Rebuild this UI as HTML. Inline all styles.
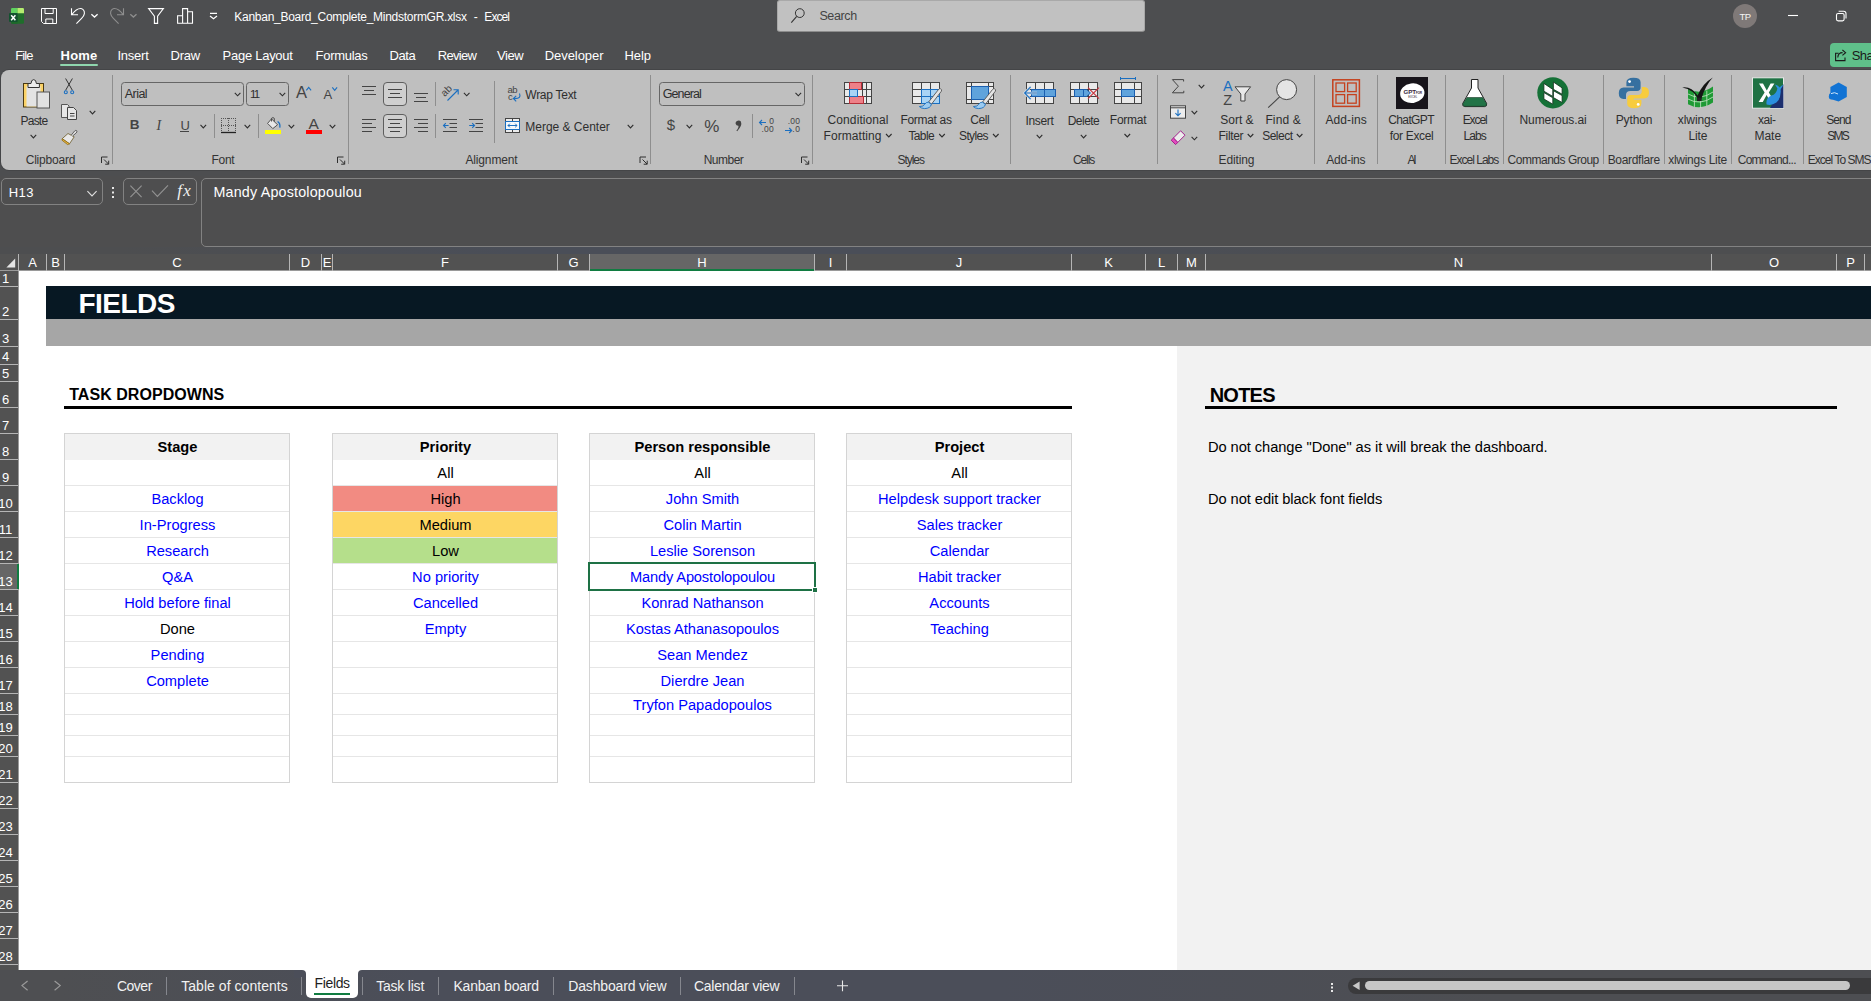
<!DOCTYPE html><html><head><meta charset="utf-8"><title>Kanban_Board_Complete_MindstormGR.xlsx - Excel</title><style>
*{box-sizing:border-box;margin:0;padding:0}
html,body{width:1871px;height:1001px;overflow:hidden;background:#4d4e50;font-family:"Liberation Sans",sans-serif;}
#app{position:relative;width:1871px;height:1001px;overflow:hidden;background:#4d4e50;}
.a{position:absolute;white-space:nowrap;}
.c{text-align:center;transform:translateX(-50%);}
svg{position:absolute;overflow:visible}
</style></head><body><div id="app">
<div class="a" style="left:234.30px;top:8.84px;font-size:12px;line-height:16px;color:#ffffff;letter-spacing:-0.273px;">Kanban_Board_Complete_MindstormGR.xlsx</div>
<div class="a" style="left:473.80px;top:8.84px;font-size:12px;line-height:16px;color:#ffffff;">-</div>
<div class="a" style="left:484.30px;top:8.84px;font-size:12px;line-height:16px;color:#ffffff;letter-spacing:-0.910px;">Excel</div>
<div class="a" style="left:777px;top:0px;width:368px;height:32px;background:#c1c1c1;border-radius:3px;border:1px solid #a9a9a9;border-bottom-color:#8c8c8c"></div>
<div class="a" style="left:819.40px;top:8.37px;font-size:12.5px;line-height:16px;color:#444;letter-spacing:-0.360px;">Search</div>
<div class="a" style="left:1733px;top:4px;width:24px;height:24px;border-radius:12px;background:#7f7978"></div>
<div class="a" style="left:1739.40px;top:10.61px;font-size:9.5px;line-height:12px;color:#f4f4f4;letter-spacing:-0.541px;">TP</div>
<div class="a" style="left:15.30px;top:46.80px;font-size:13px;line-height:17px;color:#ffffff;letter-spacing:-0.948px;">File</div>
<div class="a" style="left:60.60px;top:46.80px;font-size:13px;line-height:17px;color:#ffffff;letter-spacing:0.162px;font-weight:bold;">Home</div>
<div class="a" style="left:117.50px;top:46.80px;font-size:13px;line-height:17px;color:#ffffff;letter-spacing:-0.243px;">Insert</div>
<div class="a" style="left:170.60px;top:46.80px;font-size:13px;line-height:17px;color:#ffffff;letter-spacing:-0.289px;">Draw</div>
<div class="a" style="left:222.60px;top:46.80px;font-size:13px;line-height:17px;color:#ffffff;letter-spacing:-0.271px;">Page Layout</div>
<div class="a" style="left:315.60px;top:46.80px;font-size:13px;line-height:17px;color:#ffffff;letter-spacing:-0.283px;">Formulas</div>
<div class="a" style="left:389.50px;top:46.80px;font-size:13px;line-height:17px;color:#ffffff;letter-spacing:-0.423px;">Data</div>
<div class="a" style="left:437.80px;top:46.80px;font-size:13px;line-height:17px;color:#ffffff;letter-spacing:-0.713px;">Review</div>
<div class="a" style="left:497.10px;top:46.80px;font-size:13px;line-height:17px;color:#ffffff;letter-spacing:-0.425px;">View</div>
<div class="a" style="left:544.80px;top:46.80px;font-size:13px;line-height:17px;color:#ffffff;letter-spacing:-0.069px;">Developer</div>
<div class="a" style="left:624.60px;top:46.80px;font-size:13px;line-height:17px;color:#ffffff;letter-spacing:-0.114px;">Help</div>
<div class="a" style="left:60px;top:64px;width:38px;height:2px;background:#8fd6ae;border-radius:1px"></div>
<div class="a" style="left:1830px;top:43px;width:60px;height:24px;background:#5fc08a;border-radius:4px"></div>
<div class="a" style="left:1851.80px;top:46.70px;font-size:13px;line-height:17px;color:#1a1a1a;letter-spacing:-0.621px;">Share</div>
<div class="a" style="left:0px;top:69px;width:1881px;height:102px;background:#444547;border-radius:9px 0 0 9px"></div>
<div class="a" id="ribbon" style="left:1px;top:70px;width:1880px;height:100px;background:#bfbfbf;border-radius:8px 0 0 8px"></div>
<div class="a" style="left:20.50px;top:112.74px;font-size:12px;line-height:16px;color:#2e2e2e;letter-spacing:-0.771px;">Paste</div>
<div class="a" style="left:25.70px;top:152.34px;font-size:12px;line-height:16px;color:#333333;letter-spacing:-0.207px;">Clipboard</div>
<div class="a" style="left:112px;top:75px;width:1px;height:89px;background:#8e8e8e"></div>
<div class="a" style="left:121px;top:82px;width:123px;height:24px;border:1px solid #666;border-radius:3.5px;background:none"></div>
<div class="a" style="left:124.80px;top:85.67px;font-size:12.5px;line-height:16px;color:#2e2e2e;letter-spacing:-0.553px;">Arial</div>
<div class="a" style="left:246px;top:82px;width:43px;height:24px;border:1px solid #666;border-radius:3.5px;background:none"></div>
<div class="a" style="left:250.00px;top:86.52px;font-size:11.5px;line-height:15px;color:#2e2e2e;letter-spacing:-1.737px;">11</div>
<div class="a" style="left:296.00px;top:82.28px;font-size:16.5px;line-height:21px;color:#444;">A</div>
<div class="a" style="left:323.60px;top:85.50px;font-size:13px;line-height:17px;color:#444;">A</div>
<div class="a" style="left:129.70px;top:115.92px;font-size:13.5px;line-height:18px;color:#444;font-weight:bold;">B</div>
<div class="a" style="left:156.46px;top:116.67px;font-size:14px;line-height:18px;color:#444;font-style:italic;font-family:'Liberation Serif',serif;">I</div>
<div class="a" style="left:180.50px;top:116.60px;font-size:13px;line-height:17px;color:#444;">U</div>
<div class="a" style="left:180px;top:131px;width:9px;height:1px;background:#444"></div>
<div class="a" style="left:214px;top:114px;width:1px;height:24px;background:#8e8e8e"></div>
<div class="a" style="left:258px;top:114px;width:1px;height:24px;background:#8e8e8e"></div>
<div class="a" style="left:308.60px;top:113.63px;font-size:15.5px;line-height:20px;color:#444;">A</div>
<div class="a" style="left:211.60px;top:152.34px;font-size:12px;line-height:16px;color:#333333;letter-spacing:-0.304px;">Font</div>
<div class="a" style="left:348px;top:75px;width:1px;height:89px;background:#8e8e8e"></div>
<div class="a" style="left:383px;top:82px;width:24px;height:24px;border:1px solid #5e5e5e;border-radius:4px;background:#cfcfcf"></div>
<div class="a" style="left:435px;top:82px;width:1px;height:24px;background:#8e8e8e"></div>
<div class="a" style="left:441px;top:84.5px;font-size:10px;line-height:12px;color:#444;transform:rotate(-45deg);transform-origin:50% 50%">ab</div>
<div class="a" style="left:494px;top:81px;width:1px;height:62px;background:#8e8e8e"></div>
<div class="a" style="left:507.60px;top:84.31px;font-size:9.5px;line-height:12px;color:#444;letter-spacing:-0.664px;">ab</div>
<div class="a" style="left:508.00px;top:91.21px;font-size:9.5px;line-height:12px;color:#444;">c</div>
<div class="a" style="left:525.30px;top:86.74px;font-size:12px;line-height:16px;color:#2e2e2e;letter-spacing:-0.272px;">Wrap Text</div>
<div class="a" style="left:383px;top:114px;width:24px;height:24px;border:1px solid #5e5e5e;border-radius:4px;background:#cfcfcf"></div>
<div class="a" style="left:435px;top:114px;width:1px;height:24px;background:#8e8e8e"></div>
<div class="a" style="left:525.30px;top:119.04px;font-size:12px;line-height:16px;color:#2e2e2e;letter-spacing:-0.016px;">Merge &amp; Center</div>
<div class="a" style="left:465.40px;top:152.34px;font-size:12px;line-height:16px;color:#333333;letter-spacing:-0.133px;">Alignment</div>
<div class="a" style="left:650px;top:75px;width:1px;height:89px;background:#8e8e8e"></div>
<div class="a" style="left:659px;top:82px;width:146px;height:24px;border:1px solid #666;border-radius:3.5px;background:none"></div>
<div class="a" style="left:662.80px;top:85.67px;font-size:12.5px;line-height:16px;color:#2e2e2e;letter-spacing:-0.929px;">General</div>
<div class="a" style="left:666.80px;top:115.40px;font-size:15px;line-height:20px;color:#444;">$</div>
<div class="a" style="left:704.20px;top:115.71px;font-size:17px;line-height:22px;color:#444;">%</div>
<div class="a" style="left:752px;top:114px;width:1px;height:24px;background:#8e8e8e"></div>
<div class="a" style="left:769.20px;top:115.75px;font-size:8.5px;line-height:11px;color:#444;">0</div>
<div class="a" style="left:761.50px;top:124.35px;font-size:8.5px;line-height:11px;color:#444;letter-spacing:0.242px;">.00</div>
<div class="a" style="left:787.80px;top:115.75px;font-size:8.5px;line-height:11px;color:#444;letter-spacing:0.193px;">.00</div>
<div class="a" style="left:792.20px;top:124.35px;font-size:8.5px;line-height:11px;color:#444;letter-spacing:0.711px;">.0</div>
<div class="a" style="left:703.70px;top:152.34px;font-size:12px;line-height:16px;color:#333333;letter-spacing:-0.517px;">Number</div>
<div class="a" style="left:812px;top:75px;width:1px;height:89px;background:#8e8e8e"></div>
<div class="a" style="left:827.60px;top:111.74px;font-size:12px;line-height:16px;color:#2e2e2e;letter-spacing:0.086px;">Conditional</div>
<div class="a" style="left:823.50px;top:127.74px;font-size:12px;line-height:16px;color:#2e2e2e;letter-spacing:0.072px;">Formatting</div>
<div class="a" style="left:900.40px;top:111.74px;font-size:12px;line-height:16px;color:#2e2e2e;letter-spacing:-0.301px;">Format as</div>
<div class="a" style="left:908.40px;top:127.74px;font-size:12px;line-height:16px;color:#2e2e2e;letter-spacing:-0.598px;">Table</div>
<div class="a" style="left:970.30px;top:111.74px;font-size:12px;line-height:16px;color:#2e2e2e;letter-spacing:-0.459px;">Cell</div>
<div class="a" style="left:959.00px;top:127.74px;font-size:12px;line-height:16px;color:#2e2e2e;letter-spacing:-0.615px;">Styles</div>
<div class="a" style="left:897.50px;top:152.34px;font-size:12px;line-height:16px;color:#333333;letter-spacing:-1.035px;">Styles</div>
<div class="a" style="left:1010px;top:75px;width:1px;height:89px;background:#8e8e8e"></div>
<div class="a" style="left:1025.40px;top:112.74px;font-size:12px;line-height:16px;color:#2e2e2e;letter-spacing:-0.302px;">Insert</div>
<div class="a" style="left:1067.70px;top:112.74px;font-size:12px;line-height:16px;color:#2e2e2e;letter-spacing:-0.518px;">Delete</div>
<div class="a" style="left:1109.80px;top:111.74px;font-size:12px;line-height:16px;color:#2e2e2e;letter-spacing:-0.241px;">Format</div>
<div class="a" style="left:1072.90px;top:152.34px;font-size:12px;line-height:16px;color:#333333;letter-spacing:-1.069px;">Cells</div>
<div class="a" style="left:1157px;top:75px;width:1px;height:89px;background:#8e8e8e"></div>
<div class="a" style="left:1223.10px;top:76.68px;font-size:14.5px;line-height:19px;color:#1b6fc0;">A</div>
<div class="a" style="left:1223.30px;top:90.78px;font-size:14.5px;line-height:19px;color:#444;">Z</div>
<div class="a" style="left:1220.30px;top:111.74px;font-size:12px;line-height:16px;color:#2e2e2e;letter-spacing:-0.010px;">Sort &amp;</div>
<div class="a" style="left:1218.60px;top:127.74px;font-size:12px;line-height:16px;color:#2e2e2e;letter-spacing:-0.333px;">Filter</div>
<div class="a" style="left:1265.40px;top:111.74px;font-size:12px;line-height:16px;color:#2e2e2e;letter-spacing:0.124px;">Find &amp;</div>
<div class="a" style="left:1262.20px;top:127.74px;font-size:12px;line-height:16px;color:#2e2e2e;letter-spacing:-0.510px;">Select</div>
<div class="a" style="left:1218.60px;top:152.34px;font-size:12px;line-height:16px;color:#333333;letter-spacing:-0.133px;">Editing</div>
<div class="a" style="left:1314px;top:75px;width:1px;height:89px;background:#8e8e8e"></div>
<div class="a" style="left:1325.40px;top:111.74px;font-size:12px;line-height:16px;color:#2e2e2e;letter-spacing:0.118px;">Add-ins</div>
<div class="a" style="left:1326.30px;top:152.34px;font-size:12px;line-height:16px;color:#333333;letter-spacing:-0.249px;">Add-ins</div>
<div class="a" style="left:1377px;top:75px;width:1px;height:89px;background:#8e8e8e"></div>
<div class="a" style="left:1388.30px;top:111.74px;font-size:12px;line-height:16px;color:#2e2e2e;letter-spacing:-0.636px;">ChatGPT</div>
<div class="a" style="left:1389.80px;top:127.74px;font-size:12px;line-height:16px;color:#2e2e2e;letter-spacing:-0.347px;">for Excel</div>
<div class="a" style="left:1407.40px;top:152.34px;font-size:12px;line-height:16px;color:#333333;letter-spacing:-2.240px;">AI</div>
<div class="a" style="left:1445px;top:75px;width:1px;height:89px;background:#8e8e8e"></div>
<div class="a" style="left:1462.70px;top:111.74px;font-size:12px;line-height:16px;color:#2e2e2e;letter-spacing:-1.085px;">Excel</div>
<div class="a" style="left:1463.60px;top:127.74px;font-size:12px;line-height:16px;color:#2e2e2e;letter-spacing:-0.972px;">Labs</div>
<div class="a" style="left:1449.50px;top:152.34px;font-size:12px;line-height:16px;color:#333333;letter-spacing:-0.989px;">Excel Labs</div>
<div class="a" style="left:1503px;top:75px;width:1px;height:89px;background:#8e8e8e"></div>
<div class="a" style="left:1519.50px;top:111.74px;font-size:12px;line-height:16px;color:#2e2e2e;letter-spacing:-0.083px;">Numerous.ai</div>
<div class="a" style="left:1507.60px;top:152.34px;font-size:12px;line-height:16px;color:#333333;letter-spacing:-0.488px;">Commands Group</div>
<div class="a" style="left:1603px;top:75px;width:1px;height:89px;background:#8e8e8e"></div>
<div class="a" style="left:1615.70px;top:111.74px;font-size:12px;line-height:16px;color:#2e2e2e;letter-spacing:-0.111px;">Python</div>
<div class="a" style="left:1607.70px;top:152.34px;font-size:12px;line-height:16px;color:#333333;letter-spacing:-0.319px;">Boardflare</div>
<div class="a" style="left:1664px;top:75px;width:1px;height:89px;background:#8e8e8e"></div>
<div class="a" style="left:1677.80px;top:111.74px;font-size:12px;line-height:16px;color:#2e2e2e;letter-spacing:-0.075px;">xlwings</div>
<div class="a" style="left:1688.50px;top:127.74px;font-size:12px;line-height:16px;color:#2e2e2e;letter-spacing:-0.181px;">Lite</div>
<div class="a" style="left:1668.20px;top:152.34px;font-size:12px;line-height:16px;color:#333333;letter-spacing:-0.275px;">xlwings Lite</div>
<div class="a" style="left:1731px;top:75px;width:1px;height:89px;background:#8e8e8e"></div>
<div class="a" style="left:1758.00px;top:111.74px;font-size:12px;line-height:16px;color:#2e2e2e;letter-spacing:-0.444px;">xai-</div>
<div class="a" style="left:1754.40px;top:127.74px;font-size:12px;line-height:16px;color:#2e2e2e;letter-spacing:0.008px;">Mate</div>
<div class="a" style="left:1737.70px;top:152.34px;font-size:12px;line-height:16px;color:#333333;letter-spacing:-0.728px;">Command...</div>
<div class="a" style="left:1803px;top:75px;width:1px;height:89px;background:#8e8e8e"></div>
<div class="a" style="left:1826.20px;top:111.74px;font-size:12px;line-height:16px;color:#2e2e2e;letter-spacing:-0.940px;">Send</div>
<div class="a" style="left:1827.30px;top:127.74px;font-size:12px;line-height:16px;color:#2e2e2e;letter-spacing:-1.802px;">SMS</div>
<div class="a" style="left:1807.80px;top:152.34px;font-size:12px;line-height:16px;color:#333333;letter-spacing:-0.979px;">Excel To SMS</div>
<svg class="a" style="left:0;top:0" width="1871" height="180" viewBox="0 0 1871 180"><rect x="23.5" y="83.5" width="20" height="23.5" fill="#fbd266" stroke="#4a3a12" stroke-width="1"/>
<rect x="26.5" y="86" width="14" height="20.5" fill="#e3e3e3"/>
<path d="M28,87.5 V83.5 H31 Q31.3,79.6 33.7,79.6 Q36.1,79.6 36.4,83.5 H39.4 V87.5 Z" fill="#ececec" stroke="#333" stroke-width="1"/>
<rect x="37" y="92" width="12.5" height="16" fill="#e1e1e1" stroke="#555" stroke-width="1"/>
<path d="M30.60,134.90 l2.80,3.00 l2.80,-3.00" fill="none" stroke="#2e2e2e" stroke-width="1.1"/>
<path d="M65.6,78.5 L72.4,90.3 M72.4,78.5 L65.6,90.3" stroke="#333" stroke-width="1" fill="none"/>
<circle cx="65.8" cy="92.2" r="1.5" fill="none" stroke="#1b6fc0" stroke-width="1.1"/><circle cx="72.2" cy="92.2" r="1.5" fill="none" stroke="#1b6fc0" stroke-width="1.1"/>
<path d="M61.5,104.5 H67.5 L69,106 V117.5 H61.5 Z" fill="#e6e6e6" stroke="#555" stroke-width="1"/>
<path d="M67.5,107.5 H73.5 L76.5,110.5 V119.5 H67.5 Z" fill="#e6e6e6" stroke="#444" stroke-width="1"/>
<path d="M70,113.5 H74.5 M70,116 H74.5" stroke="#444" stroke-width="1"/>
<path d="M89.70,110.90 l2.80,3.00 l2.80,-3.00" fill="none" stroke="#2e2e2e" stroke-width="1.1"/>
<path d="M68,133.5 L74.2,136.8 L69.5,143.8 L62.2,138.7 Z" fill="#e8e8e8" stroke="#6b5a2a" stroke-width="0.8"/>
<path d="M62.2,138.7 L69.5,143.8 L67.6,144.6 L62,140.2 Z" fill="#f0b840" stroke="#8a6914" stroke-width="0.8"/>
<path d="M71.2,135.2 L74.6,131 Q76,129.8 76.8,130.8 Q77.4,131.8 76.2,133 L72.6,136" fill="#e0e0e0" stroke="#555" stroke-width="0.9"/>
<path d="M107.5,157.0 H101.5 V163.0" fill="none" stroke="#2e2e2e" stroke-width="1"/>
<path d="M104,159.5 L108.6,164.1 M105.2,164.2 H108.7 V160.7" fill="none" stroke="#2e2e2e" stroke-width="1"/>
<path d="M234.80,92.80 l2.80,3.00 l2.80,-3.00" fill="none" stroke="#2e2e2e" stroke-width="1.1"/>
<path d="M279.60,92.80 l2.80,3.00 l2.80,-3.00" fill="none" stroke="#2e2e2e" stroke-width="1.1"/>
<path d="M306.30,90.40 l2.40,-3.00 l2.40,3.00" fill="none" stroke="#1b6fc0" stroke-width="1.1"/>
<path d="M332.30,87.40 l2.40,3.00 l2.40,-3.00" fill="none" stroke="#1b6fc0" stroke-width="1.1"/>
<path d="M200.50,124.90 l2.80,3.00 l2.80,-3.00" fill="none" stroke="#2e2e2e" stroke-width="1.1"/>
<path d="M221,118.5 H236 M221,125.5 H236 M221.5,118 V132 M228.5,118 V132 M235.5,118 V132" stroke="#555" stroke-width="1" stroke-dasharray="1 1" fill="none"/>
<path d="M221,132.5 H236" stroke="#222" stroke-width="1.3"/>
<path d="M244.60,124.90 l2.80,3.00 l2.80,-3.00" fill="none" stroke="#2e2e2e" stroke-width="1.1"/>
<path d="M271.5,118.8 L277.5,124.8 L272.8,128.6 L267.6,123.4 Z" fill="#e8e8e8" stroke="#444" stroke-width="0.9"/>
<path d="M271.5,121.5 V118.3 Q273,116.8 274.3,118.3 V121.5" fill="none" stroke="#444" stroke-width="0.9"/>
<path d="M277.6,121.5 Q280.6,123.6 279.8,127.6" fill="none" stroke="#1b6fc0" stroke-width="1.3"/>
<rect x="265" y="130" width="16" height="4" fill="#ffff00"/>
<path d="M288.60,124.90 l2.80,3.00 l2.80,-3.00" fill="none" stroke="#2e2e2e" stroke-width="1.1"/>
<rect x="306" y="130" width="16" height="4" fill="#ff0000"/>
<path d="M329.70,124.90 l2.80,3.00 l2.80,-3.00" fill="none" stroke="#2e2e2e" stroke-width="1.1"/>
<path d="M343.5,157.0 H337.5 V163.0" fill="none" stroke="#2e2e2e" stroke-width="1"/>
<path d="M340,159.5 L344.6,164.1 M341.2,164.2 H344.7 V160.7" fill="none" stroke="#2e2e2e" stroke-width="1"/>
<path d="M362.0,86.5 H376.0 M364.0,90.5 H374.0 M362.0,94.5 H376.0 " stroke="#444" stroke-width="1" fill="none"/>
<path d="M388.0,89.5 H402.0 M390.0,93.5 H400.0 M388.0,97.5 H402.0 " stroke="#444" stroke-width="1" fill="none"/>
<path d="M414.0,93.5 H428.0 M416.0,97.5 H426.0 M414.0,101.5 H428.0 " stroke="#444" stroke-width="1" fill="none"/>
<path d="M447.5,100.5 L458,90 M453.5,89.8 H458.2 V94.5" fill="none" stroke="#1b6fc0" stroke-width="1.1"/>
<path d="M463.90,92.80 l2.80,3.00 l2.80,-3.00" fill="none" stroke="#2e2e2e" stroke-width="1.1"/>
<path d="M519.5,93.5 Q521.5,98.6 515,98.6 H513.6 M516.2,95.8 L513.4,98.6 L516.2,101.4" fill="none" stroke="#1b6fc0" stroke-width="1.1"/>
<path d="M362.0,119.5 H376.0 M362.0,123.5 H372.0 M362.0,127.5 H376.0 M362.0,131.5 H372.0 " stroke="#444" stroke-width="1" fill="none"/>
<path d="M388.0,119.5 H402.0 M390.0,123.5 H400.0 M388.0,127.5 H402.0 M390.0,131.5 H400.0 " stroke="#444" stroke-width="1" fill="none"/>
<path d="M414.0,119.5 H428.0 M418.0,123.5 H428.0 M414.0,127.5 H428.0 M418.0,131.5 H428.0 " stroke="#444" stroke-width="1" fill="none"/>
<path d="M443.0,119.5 H457.0 M443.0,131.5 H457.0 " stroke="#444" stroke-width="1" fill="none"/>
<path d="M449.5,123.5 H457.0 M449.5,127.5 H457.0 " stroke="#444" stroke-width="1" fill="none"/>
<path d="M443.6,125.5 H448.6 M445.8,123.2 L443.5,125.5 L445.8,127.8" fill="none" stroke="#1b6fc0" stroke-width="1.1"/>
<path d="M469.0,119.5 H483.0 M469.0,131.5 H483.0 " stroke="#444" stroke-width="1" fill="none"/>
<path d="M475.5,123.5 H483.0 M475.5,127.5 H483.0 " stroke="#444" stroke-width="1" fill="none"/>
<path d="M469.2,125.5 H474.4 M472.2,123.2 L474.5,125.5 L472.2,127.8" fill="none" stroke="#1b6fc0" stroke-width="1.1"/>
<rect x="505.5" y="118.5" width="14" height="14" fill="#ececec" stroke="#444" stroke-width="1"/>
<path d="M512.5,118.5 V121 M512.5,130 V132.5" stroke="#444" stroke-width="1"/>
<rect x="505.5" y="121.5" width="14" height="8" fill="#f4f8fc" stroke="#1b6fc0" stroke-width="1"/>
<path d="M508,125.5 H517 M509.8,123.7 L508,125.5 L509.8,127.3 M515.2,123.7 L517,125.5 L515.2,127.3" fill="none" stroke="#1b6fc0" stroke-width="1"/>
<path d="M627.70,124.90 l2.80,3.00 l2.80,-3.00" fill="none" stroke="#2e2e2e" stroke-width="1.1"/>
<path d="M646.0,157.0 H640.0 V163.0" fill="none" stroke="#2e2e2e" stroke-width="1"/>
<path d="M642.5,159.5 L647.1,164.1 M643.7,164.2 H647.2 V160.7" fill="none" stroke="#2e2e2e" stroke-width="1"/>
<path d="M795.50,92.80 l2.80,3.00 l2.80,-3.00" fill="none" stroke="#2e2e2e" stroke-width="1.1"/>
<path d="M686.60,124.90 l2.80,3.00 l2.80,-3.00" fill="none" stroke="#2e2e2e" stroke-width="1.1"/>
<path d="M736.6,121.2 Q739.2,119.6 740.9,121.6 Q742.6,125.6 737.2,131.2 L736.4,130.6 Q739,127.6 738.4,125.8 Q736.2,125.9 735.6,123.8 Q735.4,122 736.6,121.2 Z" fill="#444"/>
<path d="M759.6,122.5 H766 M762,120 L759.5,122.5 L762,125" fill="none" stroke="#1b6fc0" stroke-width="1.1"/>
<path d="M785,130.5 H791.6 M789.2,128 L791.7,130.5 L789.2,133" fill="none" stroke="#1b6fc0" stroke-width="1.1"/>
<path d="M807.5,157.0 H801.5 V163.0" fill="none" stroke="#2e2e2e" stroke-width="1"/>
<path d="M804,159.5 L808.6,164.1 M805.2,164.2 H808.7 V160.7" fill="none" stroke="#2e2e2e" stroke-width="1"/>
<rect x="844.5" y="82.5" width="27" height="21" fill="#e9e9e9" stroke="#444" stroke-width="1"/>
<path d="M849.5,82.5 V103.5 M862.5,82.5 V103.5 M866.5,82.5 V103.5 M844.5,89.5 H871.5 M844.5,96.5 H871.5 " stroke="#444" stroke-width="1" fill="none"/>
<rect x="849.5" y="82.5" width="12" height="7" fill="#ee8088" stroke="#b52e38" stroke-width="1"/>
<rect x="849.5" y="96.5" width="14" height="7" fill="#ee8088" stroke="#b52e38" stroke-width="1"/>
<rect x="849.5" y="89.5" width="8" height="7" fill="#a9d4f5" stroke="#1b6fc0" stroke-width="1"/>
<path d="M886.00,134.00 l2.80,3.00 l2.80,-3.00" fill="none" stroke="#2e2e2e" stroke-width="1.1"/>
<rect x="912.5" y="82.5" width="27" height="21" fill="#e9e9e9" stroke="#444" stroke-width="1"/>
<path d="M921.5,82.5 V103.5 M930.5,82.5 V103.5 M912.5,89.5 H939.5 M912.5,96.5 H939.5 " stroke="#444" stroke-width="1" fill="none"/>
<rect x="921.5" y="89.5" width="18" height="14" fill="#a9d4f5" stroke="#1b6fc0" stroke-width="1"/>
<path d="M930.5,89.5 V103.5 M921.5,96.5 H939.5" stroke="#1b6fc0" stroke-width="1"/>
<path d="M940.5,88.8 Q942.2,89.4 941.4,91.2 L931.6,104 L928.6,102 L938.6,89.4 Q939.5,88.4 940.5,88.8 Z" fill="#e4e4e4" stroke="#555" stroke-width="0.9"/>
<path d="M928.4,102.2 L931.4,104.2 Q930.6,108.4 924.6,108.6 Q921,108.4 919.4,106.6 Q923.6,106.6 924.8,104.2 Q926,102 928.4,102.2 Z" fill="#9ccbf0" stroke="#1b6fc0" stroke-width="0.9"/>
<path d="M939.20,134.00 l2.80,3.00 l2.80,-3.00" fill="none" stroke="#2e2e2e" stroke-width="1.1"/>
<rect x="966.5" y="82.5" width="27" height="21" fill="#e9e9e9" stroke="#444" stroke-width="1"/>
<path d="M971.5,82.5 V103.5 M988.5,82.5 V103.5 M966.5,86.5 H993.5 M966.5,99.5 H993.5 " stroke="#444" stroke-width="1" fill="none"/>
<rect x="971.5" y="86.5" width="17" height="13" fill="#5fa3dc" stroke="#1b5fb0" stroke-width="1"/>
<path d="M994.5,88.8 Q996.2,89.4 995.4,91.2 L985.6,104 L982.6,102 L992.6,89.4 Q993.5,88.4 994.5,88.8 Z" fill="#e4e4e4" stroke="#555" stroke-width="0.9"/>
<path d="M982.4,102.2 L985.4,104.2 Q984.6,108.4 978.6,108.6 Q975,108.4 973.4,106.6 Q977.6,106.6 978.8,104.2 Q980,102 982.4,102.2 Z" fill="#9ccbf0" stroke="#1b6fc0" stroke-width="0.9"/>
<path d="M993.00,134.00 l2.80,3.00 l2.80,-3.00" fill="none" stroke="#2e2e2e" stroke-width="1.1"/>
<rect x="1026.5" y="82.5" width="27" height="21" fill="#e9e9e9" stroke="#444" stroke-width="1"/>
<path d="M1035.5,82.5 V103.5 M1044.5,82.5 V103.5 M1026.5,89.5 H1053.5 M1026.5,96.5 H1053.5 " stroke="#444" stroke-width="1" fill="none"/>
<rect x="1031.5" y="89.5" width="24" height="7" fill="#5fa3dc" stroke="#1b5fb0" stroke-width="1"/>
<path d="M1044.5,89.5 V96.5" stroke="#1b5fb0" stroke-width="1"/>
<path d="M1025,93 H1037 M1030.6,86.8 L1024.6,93 L1030.6,99.2" fill="none" stroke="#d6dde4" stroke-width="2.6"/>
<path d="M1025,93 H1037 M1030.6,86.8 L1024.6,93 L1030.6,99.2" fill="none" stroke="#1b6fc0" stroke-width="1.1"/>
<path d="M1036.70,134.90 l2.80,3.00 l2.80,-3.00" fill="none" stroke="#2e2e2e" stroke-width="1.1"/>
<rect x="1070.5" y="82.5" width="27" height="21" fill="#e9e9e9" stroke="#444" stroke-width="1"/>
<path d="M1079.5,82.5 V103.5 M1088.5,82.5 V103.5 M1070.5,89.5 H1097.5 M1070.5,96.5 H1097.5 " stroke="#444" stroke-width="1" fill="none"/>
<path d="M1074.5,89.5 H1086.5 L1090.5,93 L1086.5,96.5 H1074.5 Z" fill="#5fa3dc" stroke="#1b5fb0" stroke-width="1"/>
<path d="M1083.5,89.5 V96.5" stroke="#1b5fb0" stroke-width="1"/>
<path d="M1088,87.6 L1099,98.6 M1099,87.6 L1088,98.6" stroke="#c8323c" stroke-width="1.1"/>
<path d="M1080.80,134.90 l2.80,3.00 l2.80,-3.00" fill="none" stroke="#2e2e2e" stroke-width="1.1"/>
<rect x="1114.5" y="82.5" width="27" height="21" fill="#e9e9e9" stroke="#444" stroke-width="1"/>
<path d="M1121.5,82.5 V103.5 M1134.5,82.5 V103.5 M1114.5,89.5 H1141.5 M1114.5,96.5 H1141.5 " stroke="#444" stroke-width="1" fill="none"/>
<rect x="1121.5" y="89.5" width="13" height="7" fill="#5fa3dc" stroke="#1b5fb0" stroke-width="1"/>
<path d="M1120.5,78.5 H1135.5 M1120.5,77 V80 M1135.5,77 V80" stroke="#1b6fc0" stroke-width="1"/>
<path d="M1124.50,134.00 l2.80,3.00 l2.80,-3.00" fill="none" stroke="#2e2e2e" stroke-width="1.1"/>
<path d="M1183.6,81.5 V79.6 H1172.4 L1178.4,86.2 L1172.4,92.8 H1183.8 V90.8" fill="none" stroke="#444" stroke-width="1"/>
<path d="M1198.70,84.90 l2.80,3.00 l2.80,-3.00" fill="none" stroke="#2e2e2e" stroke-width="1.1"/>
<rect x="1170.5" y="105.8" width="15" height="12.4" fill="#ececec" stroke="#444" stroke-width="1"/>
<path d="M1170.5,107.8 H1185.5" stroke="#444" stroke-width="1"/>
<path d="M1178,109.6 V115.6 M1175.4,113.2 L1178,115.8 L1180.6,113.2" fill="none" stroke="#1b6fc0" stroke-width="1.1"/>
<path d="M1191.60,110.90 l2.80,3.00 l2.80,-3.00" fill="none" stroke="#2e2e2e" stroke-width="1.1"/>
<path d="M1180.6,130.8 L1185,135.2 L1177.8,142.4 L1173.4,138 Z" fill="#ececec" stroke="#a3208c" stroke-width="1"/>
<path d="M1173.4,138 L1177.8,142.4 L1175.6,144.6 L1171.2,140.2 Z" fill="#e24bbd" stroke="#a3208c" stroke-width="1"/>
<path d="M1191.60,136.80 l2.80,3.00 l2.80,-3.00" fill="none" stroke="#2e2e2e" stroke-width="1.1"/>
<path d="M1235,86.8 H1250.6 L1245,94 V101 H1240.8 V94 Z" fill="#e8e8e8" stroke="#444" stroke-width="1"/>
<path d="M1247.70,134.00 l2.80,3.00 l2.80,-3.00" fill="none" stroke="#2e2e2e" stroke-width="1.1"/>
<circle cx="1286.6" cy="89.6" r="10" fill="#e4e4e4" stroke="#444" stroke-width="1"/>
<path d="M1279.6,96.8 L1268.2,107.6" stroke="#444" stroke-width="1.1"/>
<path d="M1296.80,134.00 l2.80,3.00 l2.80,-3.00" fill="none" stroke="#2e2e2e" stroke-width="1.1"/>
<rect x="1332.8" y="79.8" width="26.6" height="26.6" fill="none" stroke="#c5411e" stroke-width="1.5"/>
<rect x="1336" y="83" width="8.6" height="8.6" fill="none" stroke="#c5411e" stroke-width="1.3"/>
<rect x="1347.6" y="83" width="8.6" height="8.6" fill="none" stroke="#c5411e" stroke-width="1.3"/>
<rect x="1336" y="94.6" width="8.6" height="8.6" fill="none" stroke="#c5411e" stroke-width="1.3"/>
<rect x="1347.6" y="94.6" width="8.6" height="8.6" fill="none" stroke="#c5411e" stroke-width="1.3"/>
<rect x="1396" y="77" width="32" height="32" fill="#17141a"/>
<ellipse cx="1412.3" cy="93.2" rx="12.2" ry="9.8" fill="#fff" transform="rotate(-8 1412.3 93.2)"/>
<text x="1403.6" y="94.4" font-family="Liberation Sans, sans-serif" font-weight="bold" font-size="6.2" fill="#3a2a3a" letter-spacing="-0.2">GPT<tspan font-size="3.2" dy="-0.3">FOR</tspan></text>
<text x="1408.2" y="98" font-family="Liberation Sans, sans-serif" font-size="2.8" fill="#3a2a3a">EXCEL</text>
<path d="M1471.5,79.5 H1478 V88 L1486.6,103.4 Q1487.4,106.4 1484.6,106.6 H1464.8 Q1462,106.4 1462.8,103.4 L1471.5,88 Z" fill="#fff" stroke="#222" stroke-width="1"/>
<path d="M1467,97.5 H1482.6 L1486.4,103.6 Q1487,106.2 1484.6,106.3 H1464.8 Q1462.4,106.2 1463,103.6 Z" fill="#217346" stroke="#1a3a28" stroke-width="0.6"/>
<circle cx="1552.9" cy="92.8" r="15.6" fill="#157137"/>
<path d="M1543.9,83.4 L1552.8,89.4 V96.4 L1543.9,91.2 Z M1543.9,92.6 L1552.8,97.8 V104.2 L1543.9,99 Z M1553.4,82 L1562.1,87.9 V94.2 L1553.4,89.3 Z M1553.4,90.7 L1562.1,95.6 V102.5 L1553.4,97.6 Z" fill="#fff" stroke="#12301c" stroke-width="0.8"/>
<path d="M1633.4,77.8 Q1626.4,77.8 1626.4,82.4 V86.2 H1634 V87.4 H1623.6 Q1618.8,87.6 1618.8,93.2 Q1618.8,98.8 1623.4,99 H1626 V95 Q1626,91 1630.4,91 H1637 Q1640.6,91 1640.6,87.2 V82.2 Q1640.6,77.8 1633.4,77.8 Z" fill="#3670a0"/>
<circle cx="1629.6" cy="81.6" r="1.4" fill="#fff"/>
<path d="M1634.4,108.2 Q1641.4,108.2 1641.4,103.6 V99.8 H1633.8 V98.6 H1644.2 Q1649,98.4 1649,92.8 Q1649,87.2 1644.4,87 H1641.8 V91 Q1641.8,95 1637.4,95 H1630.8 Q1627.2,95 1627.2,98.8 V103.8 Q1627.2,108.2 1634.4,108.2 Z" fill="#f7cc3e"/>
<circle cx="1638.2" cy="104.4" r="1.4" fill="#fff"/>
<path d="M1688,88.6 Q1700,95.6 1713,86.6 V102.6 Q1700,111 1688,104.2 Z" fill="#1f9a35"/>
<path d="M1688,94 Q1700,101 1713,92 M1688,99 Q1700,106 1713,97 M1694.4,91.4 V107 M1700.6,92.6 V108 M1706.8,90.6 V106" stroke="#c8e6c8" stroke-width="0.8" fill="none"/>
<path d="M1682.2,87.6 Q1691,86 1697.6,95.6 Q1702.6,83.6 1712.8,77.6 Q1705,86 1701.2,99.6 L1698.2,100 Q1694,89.6 1682.2,87.6 Z" fill="#151515"/>
<rect x="1697" y="97.6" width="4.6" height="3.4" fill="#222"/>
<rect x="1752.5" y="77.8" width="31" height="30.4" fill="#1f7244" stroke="#e8e8e8" stroke-width="1"/>
<path d="M1770,108 L1783.4,84 V108 Z" fill="#1c2f6e"/>
<path d="M1759,83.4 L1763,83.4 L1766.8,90.4 L1770.6,83.4 L1774.4,83.4 L1768.8,92.6 L1774.6,102 L1770.4,102 L1766.6,95 L1762.8,102 L1758.6,102 L1764.6,92.6 Z" fill="#fff"/>
<path d="M1766.6,104.6 Q1765.4,98 1771.4,95.6 Q1776.4,94 1777.4,88.4 L1775,84.6 Q1778.6,85.4 1779.6,87.6 Q1781.4,85 1783.4,85 Q1781.6,87.4 1780.6,89.6 Q1781.4,98 1776.4,102.6 Q1771.6,106 1766.6,104.6 Z" fill="#2a8fdf"/>
<path d="M1838.6,82.4 L1846.8,87 V97 L1838.6,101.6 L1833,99.8 Q1828.6,99.6 1828.8,96.4 Q1828.8,93.6 1830.4,93 V87 Z" fill="#1173d4"/>
<path d="M1831,93.6 Q1834.6,91.6 1838,94" fill="none" stroke="#cfe6fb" stroke-width="1"/></svg>
<div class="a" style="left:0;top:176px;width:1871px;height:77px;background:#4e4e4f"></div>
<div class="a" style="left:1px;top:178px;width:102px;height:27px;border:1px solid #828282;border-radius:5px"></div>
<div class="a" style="left:8.70px;top:183.90px;font-size:13px;line-height:17px;color:#ffffff;letter-spacing:0.529px;">H13</div>
<div class="a" style="left:123px;top:178px;width:74px;height:27px;border:1px solid #828282;border-radius:5px"></div>
<div class="a" style="left:177.20px;top:180.26px;font-size:17px;line-height:22px;color:#f0f0f0;letter-spacing:1.326px;font-style:italic;font-family:'Liberation Serif',serif;">fx</div>
<div class="a" style="left:201px;top:178px;width:1690px;height:69px;border:1px solid #828282;border-radius:5px"></div>
<div class="a" style="left:213.40px;top:183.25px;font-size:14.3px;line-height:19px;color:#ffffff;letter-spacing:0.195px;">Mandy Apostolopoulou</div>
<div class="a" style="left:0;top:247px;width:1871px;height:7px;background:linear-gradient(90deg,#4d4e50 0,#4d4e50 120px,#4a4e58 520px,#4a4e58 1000px,#4d4e50 1500px)"></div>
<div class="a" style="left:0;top:254px;width:1871px;height:17px;background:#525252;border-bottom:1px solid #9a9a9a"></div>
<div class="a" style="left:0;top:271px;width:19px;height:699px;background:#525252;border-right:1px solid #9a9a9a"></div>
<div class="a" style="left:19px;top:271px;width:1852px;height:699px;background:#fff"></div>
<div class="a" style="left:18px;top:254px;width:1px;height:17px;background:#b5b5b5"></div>
<div class="a" style="left:46px;top:254px;width:1px;height:17px;background:#b5b5b5"></div>
<div class="a c" style="left:32.5px;top:255px;font-size:13px;line-height:15px;color:#fff">A</div>
<div class="a" style="left:64px;top:254px;width:1px;height:17px;background:#b5b5b5"></div>
<div class="a c" style="left:55.5px;top:255px;font-size:13px;line-height:15px;color:#fff">B</div>
<div class="a" style="left:289px;top:254px;width:1px;height:17px;background:#b5b5b5"></div>
<div class="a c" style="left:177.0px;top:255px;font-size:13px;line-height:15px;color:#fff">C</div>
<div class="a" style="left:321px;top:254px;width:1px;height:17px;background:#b5b5b5"></div>
<div class="a c" style="left:305.5px;top:255px;font-size:13px;line-height:15px;color:#fff">D</div>
<div class="a" style="left:332px;top:254px;width:1px;height:17px;background:#b5b5b5"></div>
<div class="a c" style="left:327.0px;top:255px;font-size:13px;line-height:15px;color:#fff">E</div>
<div class="a" style="left:557px;top:254px;width:1px;height:17px;background:#b5b5b5"></div>
<div class="a c" style="left:445.0px;top:255px;font-size:13px;line-height:15px;color:#fff">F</div>
<div class="a" style="left:589px;top:254px;width:1px;height:17px;background:#b5b5b5"></div>
<div class="a c" style="left:573.5px;top:255px;font-size:13px;line-height:15px;color:#fff">G</div>
<div class="a" style="left:590px;top:254px;width:224px;height:17px;background:#666;border-bottom:2px solid #107c41"></div>
<div class="a" style="left:814px;top:254px;width:1px;height:17px;background:#b5b5b5"></div>
<div class="a c" style="left:702.0px;top:255px;font-size:13px;line-height:15px;color:#fff">H</div>
<div class="a" style="left:846px;top:254px;width:1px;height:17px;background:#b5b5b5"></div>
<div class="a c" style="left:830.5px;top:255px;font-size:13px;line-height:15px;color:#fff">I</div>
<div class="a" style="left:1071px;top:254px;width:1px;height:17px;background:#b5b5b5"></div>
<div class="a c" style="left:959.0px;top:255px;font-size:13px;line-height:15px;color:#fff">J</div>
<div class="a" style="left:1145px;top:254px;width:1px;height:17px;background:#b5b5b5"></div>
<div class="a c" style="left:1108.5px;top:255px;font-size:13px;line-height:15px;color:#fff">K</div>
<div class="a" style="left:1177px;top:254px;width:1px;height:17px;background:#b5b5b5"></div>
<div class="a c" style="left:1161.5px;top:255px;font-size:13px;line-height:15px;color:#fff">L</div>
<div class="a" style="left:1205px;top:254px;width:1px;height:17px;background:#b5b5b5"></div>
<div class="a c" style="left:1191.5px;top:255px;font-size:13px;line-height:15px;color:#fff">M</div>
<div class="a" style="left:1711px;top:254px;width:1px;height:17px;background:#b5b5b5"></div>
<div class="a c" style="left:1458.5px;top:255px;font-size:13px;line-height:15px;color:#fff">N</div>
<div class="a" style="left:1836px;top:254px;width:1px;height:17px;background:#b5b5b5"></div>
<div class="a c" style="left:1774.0px;top:255px;font-size:13px;line-height:15px;color:#fff">O</div>
<div class="a" style="left:1864px;top:254px;width:1px;height:17px;background:#b5b5b5"></div>
<div class="a c" style="left:1850.5px;top:255px;font-size:13px;line-height:15px;color:#fff">P</div>
<div class="a" style="left:0;top:286px;width:18px;height:1px;background:#b5b5b5"></div>
<div class="a c" style="left:5.5px;top:271px;font-size:13px;line-height:15px;color:#fff">1</div>
<div class="a" style="left:0;top:319px;width:18px;height:1px;background:#b5b5b5"></div>
<div class="a c" style="left:5.5px;top:304px;font-size:13px;line-height:15px;color:#fff">2</div>
<div class="a" style="left:0;top:346px;width:18px;height:1px;background:#b5b5b5"></div>
<div class="a c" style="left:5.5px;top:331px;font-size:13px;line-height:15px;color:#fff">3</div>
<div class="a" style="left:0;top:364px;width:18px;height:1px;background:#b5b5b5"></div>
<div class="a c" style="left:5.5px;top:349px;font-size:13px;line-height:15px;color:#fff">4</div>
<div class="a" style="left:0;top:381px;width:18px;height:1px;background:#b5b5b5"></div>
<div class="a c" style="left:5.5px;top:366px;font-size:13px;line-height:15px;color:#fff">5</div>
<div class="a" style="left:0;top:407px;width:18px;height:1px;background:#b5b5b5"></div>
<div class="a c" style="left:5.5px;top:392px;font-size:13px;line-height:15px;color:#fff">6</div>
<div class="a" style="left:0;top:433px;width:18px;height:1px;background:#b5b5b5"></div>
<div class="a c" style="left:5.5px;top:418px;font-size:13px;line-height:15px;color:#fff">7</div>
<div class="a" style="left:0;top:459px;width:18px;height:1px;background:#b5b5b5"></div>
<div class="a c" style="left:5.5px;top:444px;font-size:13px;line-height:15px;color:#fff">8</div>
<div class="a" style="left:0;top:485px;width:18px;height:1px;background:#b5b5b5"></div>
<div class="a c" style="left:5.5px;top:470px;font-size:13px;line-height:15px;color:#fff">9</div>
<div class="a" style="left:0;top:511px;width:18px;height:1px;background:#b5b5b5"></div>
<div class="a c" style="left:5.5px;top:496px;font-size:13px;line-height:15px;color:#fff">10</div>
<div class="a" style="left:0;top:537px;width:18px;height:1px;background:#b5b5b5"></div>
<div class="a c" style="left:5.5px;top:522px;font-size:13px;line-height:15px;color:#fff">11</div>
<div class="a" style="left:0;top:563px;width:18px;height:1px;background:#b5b5b5"></div>
<div class="a c" style="left:5.5px;top:548px;font-size:13px;line-height:15px;color:#fff">12</div>
<div class="a" style="left:0;top:564px;width:19px;height:25px;background:#666;border-right:2px solid #107c41"></div>
<div class="a" style="left:0;top:589px;width:18px;height:1px;background:#b5b5b5"></div>
<div class="a c" style="left:5.5px;top:574px;font-size:13px;line-height:15px;color:#fff">13</div>
<div class="a" style="left:0;top:615px;width:18px;height:1px;background:#b5b5b5"></div>
<div class="a c" style="left:5.5px;top:600px;font-size:13px;line-height:15px;color:#fff">14</div>
<div class="a" style="left:0;top:641px;width:18px;height:1px;background:#b5b5b5"></div>
<div class="a c" style="left:5.5px;top:626px;font-size:13px;line-height:15px;color:#fff">15</div>
<div class="a" style="left:0;top:667px;width:18px;height:1px;background:#b5b5b5"></div>
<div class="a c" style="left:5.5px;top:652px;font-size:13px;line-height:15px;color:#fff">16</div>
<div class="a" style="left:0;top:693px;width:18px;height:1px;background:#b5b5b5"></div>
<div class="a c" style="left:5.5px;top:678px;font-size:13px;line-height:15px;color:#fff">17</div>
<div class="a" style="left:0;top:714px;width:18px;height:1px;background:#b5b5b5"></div>
<div class="a c" style="left:5.5px;top:699px;font-size:13px;line-height:15px;color:#fff">18</div>
<div class="a" style="left:0;top:735px;width:18px;height:1px;background:#b5b5b5"></div>
<div class="a c" style="left:5.5px;top:720px;font-size:13px;line-height:15px;color:#fff">19</div>
<div class="a" style="left:0;top:756px;width:18px;height:1px;background:#b5b5b5"></div>
<div class="a c" style="left:5.5px;top:741px;font-size:13px;line-height:15px;color:#fff">20</div>
<div class="a" style="left:0;top:782px;width:18px;height:1px;background:#b5b5b5"></div>
<div class="a c" style="left:5.5px;top:767px;font-size:13px;line-height:15px;color:#fff">21</div>
<div class="a" style="left:0;top:808px;width:18px;height:1px;background:#b5b5b5"></div>
<div class="a c" style="left:5.5px;top:793px;font-size:13px;line-height:15px;color:#fff">22</div>
<div class="a" style="left:0;top:834px;width:18px;height:1px;background:#b5b5b5"></div>
<div class="a c" style="left:5.5px;top:819px;font-size:13px;line-height:15px;color:#fff">23</div>
<div class="a" style="left:0;top:860px;width:18px;height:1px;background:#b5b5b5"></div>
<div class="a c" style="left:5.5px;top:845px;font-size:13px;line-height:15px;color:#fff">24</div>
<div class="a" style="left:0;top:886px;width:18px;height:1px;background:#b5b5b5"></div>
<div class="a c" style="left:5.5px;top:871px;font-size:13px;line-height:15px;color:#fff">25</div>
<div class="a" style="left:0;top:912px;width:18px;height:1px;background:#b5b5b5"></div>
<div class="a c" style="left:5.5px;top:897px;font-size:13px;line-height:15px;color:#fff">26</div>
<div class="a" style="left:0;top:938px;width:18px;height:1px;background:#b5b5b5"></div>
<div class="a c" style="left:5.5px;top:923px;font-size:13px;line-height:15px;color:#fff">27</div>
<div class="a" style="left:0;top:964px;width:18px;height:1px;background:#b5b5b5"></div>
<div class="a c" style="left:5.5px;top:949px;font-size:13px;line-height:15px;color:#fff">28</div>
<div class="a" style="left:46px;top:286px;width:1825px;height:33px;background:#071823"></div>
<div class="a" style="left:46px;top:319px;width:1825px;height:27px;background:#a6a6a6"></div>
<div class="a" style="left:1177px;top:346px;width:694px;height:624px;background:#f2f2f2"></div>
<div class="a" style="left:78.40px;top:285.90px;font-size:28px;line-height:36px;color:#fff;letter-spacing:-0.514px;font-weight:bold;">FIELDS</div>
<div class="a" style="left:69.20px;top:384.06px;font-size:16px;line-height:21px;color:#000;letter-spacing:0.049px;font-weight:bold;">TASK DROPDOWNS</div>
<div class="a" style="left:64px;top:406px;width:1008px;height:3px;background:#000"></div>
<div class="a" style="left:1209.70px;top:382.17px;font-size:20px;line-height:26px;color:#000;letter-spacing:-0.775px;font-weight:bold;">NOTES</div>
<div class="a" style="left:1205px;top:406px;width:632px;height:3px;background:#000"></div>
<div class="a" style="left:1208px;top:439px;font-size:14.67px;line-height:17px;letter-spacing:-0.063px;color:#000">Do not change "Done" as it will break the dashboard.</div>
<div class="a" style="left:1208px;top:491px;font-size:14.67px;line-height:17px;letter-spacing:-0.063px;color:#000">Do not edit black font fields</div>
<div class="a" style="left:64px;top:433px;width:226px;height:350px;border:1px solid #d4d4d4;background:#fff"></div>
<div class="a" style="left:65px;top:434px;width:224px;height:26px;background:#f2f2f2"></div>
<div class="a c" style="left:177.5px;top:439px;font-size:14.67px;font-weight:bold;line-height:17px;color:#000">Stage</div>
<div class="a" style="left:65px;top:485px;width:224px;height:1px;background:#e6e6e6"></div>
<div class="a" style="left:65px;top:511px;width:224px;height:1px;background:#e6e6e6"></div>
<div class="a" style="left:65px;top:537px;width:224px;height:1px;background:#e6e6e6"></div>
<div class="a" style="left:65px;top:563px;width:224px;height:1px;background:#e6e6e6"></div>
<div class="a" style="left:65px;top:589px;width:224px;height:1px;background:#e6e6e6"></div>
<div class="a" style="left:65px;top:615px;width:224px;height:1px;background:#e6e6e6"></div>
<div class="a" style="left:65px;top:641px;width:224px;height:1px;background:#e6e6e6"></div>
<div class="a" style="left:65px;top:667px;width:224px;height:1px;background:#e6e6e6"></div>
<div class="a" style="left:65px;top:693px;width:224px;height:1px;background:#e6e6e6"></div>
<div class="a" style="left:65px;top:714px;width:224px;height:1px;background:#e6e6e6"></div>
<div class="a" style="left:65px;top:735px;width:224px;height:1px;background:#e6e6e6"></div>
<div class="a" style="left:65px;top:756px;width:224px;height:1px;background:#e6e6e6"></div>
<div class="a c" style="left:177.5px;top:491.0px;font-size:14.67px;line-height:17px;color:#0000ff;">Backlog</div>
<div class="a c" style="left:177.5px;top:517.0px;font-size:14.67px;line-height:17px;color:#0000ff;">In-Progress</div>
<div class="a c" style="left:177.5px;top:543.0px;font-size:14.67px;line-height:17px;color:#0000ff;">Research</div>
<div class="a c" style="left:177.5px;top:569.0px;font-size:14.67px;line-height:17px;color:#0000ff;">Q&amp;A</div>
<div class="a c" style="left:177.5px;top:595.0px;font-size:14.67px;line-height:17px;color:#0000ff;">Hold before final</div>
<div class="a c" style="left:177.5px;top:621.0px;font-size:14.67px;line-height:17px;color:#000;">Done</div>
<div class="a c" style="left:177.5px;top:647.0px;font-size:14.67px;line-height:17px;color:#0000ff;">Pending</div>
<div class="a c" style="left:177.5px;top:673.0px;font-size:14.67px;line-height:17px;color:#0000ff;">Complete</div>
<div class="a" style="left:332px;top:433px;width:226px;height:350px;border:1px solid #d4d4d4;background:#fff"></div>
<div class="a" style="left:333px;top:434px;width:224px;height:26px;background:#f2f2f2"></div>
<div class="a c" style="left:445.5px;top:439px;font-size:14.67px;font-weight:bold;line-height:17px;color:#000">Priority</div>
<div class="a" style="left:333px;top:485px;width:224px;height:1px;background:#e6e6e6"></div>
<div class="a" style="left:333px;top:511px;width:224px;height:1px;background:#e6e6e6"></div>
<div class="a" style="left:333px;top:537px;width:224px;height:1px;background:#e6e6e6"></div>
<div class="a" style="left:333px;top:563px;width:224px;height:1px;background:#e6e6e6"></div>
<div class="a" style="left:333px;top:589px;width:224px;height:1px;background:#e6e6e6"></div>
<div class="a" style="left:333px;top:615px;width:224px;height:1px;background:#e6e6e6"></div>
<div class="a" style="left:333px;top:641px;width:224px;height:1px;background:#e6e6e6"></div>
<div class="a" style="left:333px;top:667px;width:224px;height:1px;background:#e6e6e6"></div>
<div class="a" style="left:333px;top:693px;width:224px;height:1px;background:#e6e6e6"></div>
<div class="a" style="left:333px;top:714px;width:224px;height:1px;background:#e6e6e6"></div>
<div class="a" style="left:333px;top:735px;width:224px;height:1px;background:#e6e6e6"></div>
<div class="a" style="left:333px;top:756px;width:224px;height:1px;background:#e6e6e6"></div>
<div class="a c" style="left:445.5px;top:465.0px;font-size:14.67px;line-height:17px;color:#000;">All</div>
<div class="a" style="left:333px;top:486px;width:224px;height:25px;background:#f28b82"></div>
<div class="a c" style="left:445.5px;top:491.0px;font-size:14.67px;line-height:17px;color:#000;">High</div>
<div class="a" style="left:333px;top:512px;width:224px;height:25px;background:#fdd663"></div>
<div class="a c" style="left:445.5px;top:517.0px;font-size:14.67px;line-height:17px;color:#000;">Medium</div>
<div class="a" style="left:333px;top:538px;width:224px;height:25px;background:#b5df8b"></div>
<div class="a c" style="left:445.5px;top:543.0px;font-size:14.67px;line-height:17px;color:#000;">Low</div>
<div class="a c" style="left:445.5px;top:569.0px;font-size:14.67px;line-height:17px;color:#0000ff;">No priority</div>
<div class="a c" style="left:445.5px;top:595.0px;font-size:14.67px;line-height:17px;color:#0000ff;">Cancelled</div>
<div class="a c" style="left:445.5px;top:621.0px;font-size:14.67px;line-height:17px;color:#0000ff;">Empty</div>
<div class="a" style="left:589px;top:433px;width:226px;height:350px;border:1px solid #d4d4d4;background:#fff"></div>
<div class="a" style="left:590px;top:434px;width:224px;height:26px;background:#f2f2f2"></div>
<div class="a c" style="left:702.5px;top:439px;font-size:14.67px;font-weight:bold;line-height:17px;color:#000">Person responsible</div>
<div class="a" style="left:590px;top:485px;width:224px;height:1px;background:#e6e6e6"></div>
<div class="a" style="left:590px;top:511px;width:224px;height:1px;background:#e6e6e6"></div>
<div class="a" style="left:590px;top:537px;width:224px;height:1px;background:#e6e6e6"></div>
<div class="a" style="left:590px;top:563px;width:224px;height:1px;background:#e6e6e6"></div>
<div class="a" style="left:590px;top:589px;width:224px;height:1px;background:#e6e6e6"></div>
<div class="a" style="left:590px;top:615px;width:224px;height:1px;background:#e6e6e6"></div>
<div class="a" style="left:590px;top:641px;width:224px;height:1px;background:#e6e6e6"></div>
<div class="a" style="left:590px;top:667px;width:224px;height:1px;background:#e6e6e6"></div>
<div class="a" style="left:590px;top:693px;width:224px;height:1px;background:#e6e6e6"></div>
<div class="a" style="left:590px;top:714px;width:224px;height:1px;background:#e6e6e6"></div>
<div class="a" style="left:590px;top:735px;width:224px;height:1px;background:#e6e6e6"></div>
<div class="a" style="left:590px;top:756px;width:224px;height:1px;background:#e6e6e6"></div>
<div class="a c" style="left:702.5px;top:465.0px;font-size:14.67px;line-height:17px;color:#000;">All</div>
<div class="a c" style="left:702.5px;top:491.0px;font-size:14.67px;line-height:17px;color:#0000ff;">John Smith</div>
<div class="a c" style="left:702.5px;top:517.0px;font-size:14.67px;line-height:17px;color:#0000ff;">Colin Martin</div>
<div class="a c" style="left:702.5px;top:543.0px;font-size:14.67px;line-height:17px;color:#0000ff;">Leslie Sorenson</div>
<div class="a c" style="left:702.5px;top:569.0px;font-size:14.67px;line-height:17px;color:#0000ff;letter-spacing:-0.17px;">Mandy Apostolopoulou</div>
<div class="a c" style="left:702.5px;top:595.0px;font-size:14.67px;line-height:17px;color:#0000ff;">Konrad Nathanson</div>
<div class="a c" style="left:702.5px;top:621.0px;font-size:14.67px;line-height:17px;color:#0000ff;">Kostas Athanasopoulos</div>
<div class="a c" style="left:702.5px;top:647.0px;font-size:14.67px;line-height:17px;color:#0000ff;">Sean Mendez</div>
<div class="a c" style="left:702.5px;top:673.0px;font-size:14.67px;line-height:17px;color:#0000ff;">Dierdre Jean</div>
<div class="a c" style="left:702.5px;top:696.5px;font-size:14.67px;line-height:17px;color:#0000ff;">Tryfon Papadopoulos</div>
<div class="a" style="left:846px;top:433px;width:226px;height:350px;border:1px solid #d4d4d4;background:#fff"></div>
<div class="a" style="left:847px;top:434px;width:224px;height:26px;background:#f2f2f2"></div>
<div class="a c" style="left:959.5px;top:439px;font-size:14.67px;font-weight:bold;line-height:17px;color:#000">Project</div>
<div class="a" style="left:847px;top:485px;width:224px;height:1px;background:#e6e6e6"></div>
<div class="a" style="left:847px;top:511px;width:224px;height:1px;background:#e6e6e6"></div>
<div class="a" style="left:847px;top:537px;width:224px;height:1px;background:#e6e6e6"></div>
<div class="a" style="left:847px;top:563px;width:224px;height:1px;background:#e6e6e6"></div>
<div class="a" style="left:847px;top:589px;width:224px;height:1px;background:#e6e6e6"></div>
<div class="a" style="left:847px;top:615px;width:224px;height:1px;background:#e6e6e6"></div>
<div class="a" style="left:847px;top:641px;width:224px;height:1px;background:#e6e6e6"></div>
<div class="a" style="left:847px;top:667px;width:224px;height:1px;background:#e6e6e6"></div>
<div class="a" style="left:847px;top:693px;width:224px;height:1px;background:#e6e6e6"></div>
<div class="a" style="left:847px;top:714px;width:224px;height:1px;background:#e6e6e6"></div>
<div class="a" style="left:847px;top:735px;width:224px;height:1px;background:#e6e6e6"></div>
<div class="a" style="left:847px;top:756px;width:224px;height:1px;background:#e6e6e6"></div>
<div class="a c" style="left:959.5px;top:465.0px;font-size:14.67px;line-height:17px;color:#000;">All</div>
<div class="a c" style="left:959.5px;top:491.0px;font-size:14.67px;line-height:17px;color:#0000ff;">Helpdesk support tracker</div>
<div class="a c" style="left:959.5px;top:517.0px;font-size:14.67px;line-height:17px;color:#0000ff;">Sales tracker</div>
<div class="a c" style="left:959.5px;top:543.0px;font-size:14.67px;line-height:17px;color:#0000ff;">Calendar</div>
<div class="a c" style="left:959.5px;top:569.0px;font-size:14.67px;line-height:17px;color:#0000ff;">Habit tracker</div>
<div class="a c" style="left:959.5px;top:595.0px;font-size:14.67px;line-height:17px;color:#0000ff;">Accounts</div>
<div class="a c" style="left:959.5px;top:621.0px;font-size:14.67px;line-height:17px;color:#0000ff;">Teaching</div>
<div class="a" style="left:588px;top:562px;width:228px;height:29px;border:2px solid #1e7145"></div>
<div class="a" style="left:812px;top:587px;width:6px;height:6px;background:#1e7145;border:1px solid #fff"></div>
<div class="a" style="left:0;top:970px;width:1871px;height:31px;background:linear-gradient(90deg,#4e4f52 0,#4e4f52 60px,#4b4e59 420px,#4b4e59 1000px,#4d4e52 1500px)"></div>
<div class="a" style="left:302px;top:970px;width:60px;height:6px;background:#fff"></div>
<div class="a" style="left:294px;top:970px;width:12px;height:8px;background:#4b4e59;border-radius:0 4px 0 0"></div>
<div class="a" style="left:358px;top:970px;width:12px;height:8px;background:#4b4e59;border-radius:4px 0 0 0"></div>
<div class="a" style="left:306px;top:970px;width:52px;height:28px;background:#fff;border-radius:0 0 5px 5px"></div>
<div class="a" style="left:117.00px;top:976.95px;font-size:14px;line-height:18px;color:#f2f2f2;letter-spacing:-0.513px;">Cover</div>
<div class="a" style="left:181.20px;top:976.95px;font-size:14px;line-height:18px;color:#f2f2f2;letter-spacing:0.047px;">Table of contents</div>
<div class="a" style="left:314.50px;top:974.05px;font-size:14px;line-height:18px;color:#1e1e1e;letter-spacing:-0.350px;">Fields</div>
<div class="a" style="left:314px;top:993px;width:36px;height:2px;background:#107c41"></div>
<div class="a" style="left:376.20px;top:976.95px;font-size:14px;line-height:18px;color:#f2f2f2;letter-spacing:-0.210px;">Task list</div>
<div class="a" style="left:453.50px;top:976.95px;font-size:14px;line-height:18px;color:#f2f2f2;letter-spacing:-0.224px;">Kanban board</div>
<div class="a" style="left:568.30px;top:976.95px;font-size:14px;line-height:18px;color:#f2f2f2;letter-spacing:-0.163px;">Dashboard view</div>
<div class="a" style="left:693.90px;top:976.95px;font-size:14px;line-height:18px;color:#f2f2f2;letter-spacing:-0.245px;">Calendar view</div>
<div class="a" style="left:166px;top:977px;width:1px;height:18px;background:#85878e"></div>
<div class="a" style="left:301px;top:977px;width:1px;height:18px;background:#85878e"></div>
<div class="a" style="left:362px;top:977px;width:1px;height:18px;background:#85878e"></div>
<div class="a" style="left:438px;top:977px;width:1px;height:18px;background:#85878e"></div>
<div class="a" style="left:553px;top:977px;width:1px;height:18px;background:#85878e"></div>
<div class="a" style="left:680px;top:977px;width:1px;height:18px;background:#85878e"></div>
<div class="a" style="left:794px;top:977px;width:1px;height:18px;background:#85878e"></div>
<div class="a" style="left:1348px;top:978px;width:540px;height:16px;background:#3a3a3c;border-radius:8px"></div>
<div class="a" style="left:1365px;top:981px;width:485px;height:9px;background:#c6c6c6;border-radius:5px"></div>
<svg class="a" style="left:0;top:0" width="1871" height="1001" viewBox="0 0 1871 1001"><circle cx="799.8" cy="13.1" r="4.4" fill="none" stroke="#333" stroke-width="1"/><path d="M796.7,16.4 L791.3,22.6" stroke="#333" stroke-width="1.1"/>
<path d="M1788,15.5 H1798" stroke="#fff" stroke-width="1.1"/>
<rect x="1836.5" y="13.5" width="7.6" height="7.4" rx="1.6" fill="none" stroke="#fff" stroke-width="1.1"/>
<path d="M1838.6,11.2 H1843.6 Q1846,11.2 1846,13.6 V18.6" fill="none" stroke="#fff" stroke-width="1.1"/>
<rect x="11" y="8" width="13" height="15.8" rx="1.2" fill="#1f6e2b"/>
<path d="M12.2,8 H17.4 V13.2 H11 V9.2 Q11,8 12.2,8 Z" fill="#60d160"/>
<path d="M17.4,8 H22.8 Q24,8 24,9.2 V13.2 H17.4 Z" fill="#b5ec70"/>
<path d="M11,18 H17.4 V23.8 H12.2 Q11,23.8 11,22.6 Z" fill="#1d6a2a"/>
<rect x="9" y="13.1" width="8.7" height="9" rx="1" fill="#13522f"/>
<path d="M11.2,15.3 L15.4,20.2 M15.4,15.3 L11.2,20.2" stroke="#fff" stroke-width="1.5"/>
<path d="M41.5,8.5 H56.5 V23.5 H43.5 L41.5,21.5 Z" fill="none" stroke="#fff" stroke-width="1"/>
<path d="M45,8.5 V13.5 H53.2 V8.5 M45.8,23.5 V19 H52.8 V23.5" fill="none" stroke="#fff" stroke-width="1"/>
<path d="M71.5,8.3 V14.7 H78 M72,14.4 Q76.5,8.2 81,8.5 Q84.6,9.4 84.4,13.6 Q84,16 81.6,18.4 L76.4,23.6" fill="none" stroke="#fff" stroke-width="1.1"/>
<path d="M91.4,14.2 L94.5,17 L97.6,14.2" fill="none" stroke="#fff" stroke-width="1.3"/>
<path d="M123.5,8.3 V14.7 H117 M123,14.4 Q118.5,8.2 114,8.5 Q110.4,9.4 110.6,13.6 Q111,16 113.4,18.4 L118.6,23.6" fill="none" stroke="#8e8e8e" stroke-width="1.1"/>
<path d="M130.3,14.2 L133.4,17 L136.5,14.2" fill="none" stroke="#8e8e8e" stroke-width="1.3"/>
<path d="M148.6,8.6 H163.4 L157.6,16.2 V23.4 H154.4 V16.2 Z" fill="none" stroke="#fff" stroke-width="1.1"/>
<path d="M177.6,23.2 V15.8 H182.6 V8.6 H187.6 V11.8 H192.5 V23.2 Z M182.6,15.8 V23.2 M187.6,11.8 V23.2" fill="none" stroke="#fff" stroke-width="1.1"/>
<path d="M210,13.4 H217 M210,16 L213.5,18.8 L217,16" fill="none" stroke="#fff" stroke-width="1.2"/>
<path d="M1838.6,53.2 H1835.6 V60.6 H1845 V57.6" fill="none" stroke="#1a1a1a" stroke-width="1.1"/>
<path d="M1837.8,57.6 Q1838,52.6 1842.6,52.6 M1842.4,50 L1845.6,52.7 L1842.4,55.4" fill="none" stroke="#1a1a1a" stroke-width="1.1"/>
<path d="M87.4,191.2 L92,196 L96.6,191.2" fill="none" stroke="#e0e0e0" stroke-width="1.1"/>
<rect x="112" y="187" width="2" height="2" fill="#e8e8e8"/>
<rect x="112" y="191.5" width="2" height="2" fill="#e8e8e8"/>
<rect x="112" y="196" width="2" height="2" fill="#e8e8e8"/>
<path d="M130.4,185.6 L141.6,197.2 M141.6,185.6 L130.4,197.2" stroke="#929292" stroke-width="1.15"/>
<path d="M152,190.6 L157.4,196.4 L168,185.4" fill="none" stroke="#929292" stroke-width="1.15"/>
<path d="M15.2,258.6 V267.6 H6.4 Z" fill="#e6e6e6"/>
<path d="M27.6,981 L22,985.6 L27.6,990.2" fill="none" stroke="#9a9a9a" stroke-width="1.2"/>
<path d="M54.6,981 L60.2,985.6 L54.6,990.2" fill="none" stroke="#9a9a9a" stroke-width="1.2"/>
<path d="M837,985.8 H848 M842.5,980.4 V991.2" stroke="#e8e8e8" stroke-width="1.1"/>
<rect x="1331" y="983" width="2" height="2" fill="#e8e8e8"/>
<rect x="1331" y="986.5" width="2" height="2" fill="#e8e8e8"/>
<rect x="1331" y="990" width="2" height="2" fill="#e8e8e8"/>
<path d="M1359.6,981.4 V990 L1352.6,985.7 Z" fill="#c8c8c8"/></svg>
</div></body></html>
